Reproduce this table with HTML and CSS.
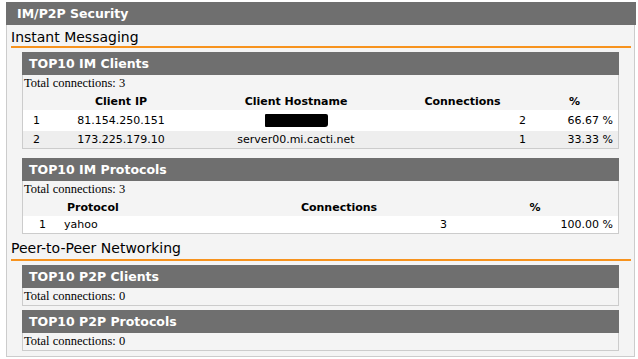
FILE: index.html
```html
<!DOCTYPE html>
<html>
<head>
<meta charset="utf-8">
<link rel="stylesheet" href="styles.css">
</head>
<body>
<div class="panel">
  <div class="panel-head">IM/P2P Security</div>

  <div class="section">Instant Messaging</div>

  <div class="box box-first">
    <div class="box-head">TOP10 IM Clients</div>
    <div class="total">Total connections: 3</div>
    <table class="grid">
      <colgroup><col style="width:21px"><col style="width:154px"><col style="width:196px"><col style="width:137px"><col></colgroup>
      <tr class="hrow"><th></th><th>Client IP</th><th>Client Hostname</th><th>Connections</th><th>%</th></tr>
      <tr class="row odd tall"><td class="idx">1</td><td class="c">81.154.250.151</td><td class="c"><span class="redact"></span></td><td class="r">2</td><td class="r">66.67 %</td></tr>
      <tr class="row even"><td class="idx">2</td><td class="c">173.225.179.10</td><td class="c">server00.mi.cacti.net</td><td class="r">1</td><td class="r">33.33 %</td></tr>
    </table>
  </div>

  <div class="box">
    <div class="box-head">TOP10 IM Protocols</div>
    <div class="total">Total connections: 3</div>
    <table class="grid">
      <colgroup><col style="width:39px"><col style="width:164px"><col style="width:226px"><col></colgroup>
      <tr class="hrow"><th></th><th class="l">Protocol</th><th>Connections</th><th>%</th></tr>
      <tr class="row odd"><td class="c">1</td><td class="l2">yahoo</td><td class="r">3</td><td class="r">100.00 %</td></tr>
    </table>
  </div>

  <div class="section section-p2p">Peer-to-Peer Networking</div>

  <div class="box">
    <div class="box-head">TOP10 P2P Clients</div>
    <div class="total">Total connections: 0</div>
  </div>

  <div class="box">
    <div class="box-head">TOP10 P2P Protocols</div>
    <div class="total">Total connections: 0</div>
  </div>
</div>
</body>
</html>
```

FILE: styles.css
```css
html, body {
  margin: 0;
  padding: 0;
  background: #ffffff;
}
body {
  padding: 2px 0 0 6px;
  font-family: "DejaVu Sans", Verdana, sans-serif;
  color: #000;
}
.panel {
  width: 627px;
  background: #f4f4f4;
  border: 1px solid #cccccc;
  border-top: none;
  padding-bottom: 5px;
}
.panel-head {
  height: 23px;
  line-height: 23px;
  margin: 0 -2px 0 -1px;
  background: #6f6f6f;
  color: #ffffff;
  font-weight: bold;
  font-size: 12.5px;
  padding-left: 11px;
}
.section {
  margin: 0 3px 0 4px;
  height: 21px;
  line-height: 25px;
  font-size: 14px;
  border-bottom: 2px solid #f7931e;
  color: #000;
}
.section-p2p {
  height: 25px;
  line-height: 29px;
}
.box {
  margin: 4px 0 0 15px;
  width: 595px;
  border: 1px solid #cccccc;
  border-top: none;
  background: #f4f4f4;
}
.box + .box {
  margin-top: 4px;
}
.box-first + .box {
  margin-top: 9px;
}
.box-head {
  height: 23px;
  line-height: 23px;
  background: #6f6f6f;
  color: #ffffff;
  font-weight: bold;
  font-size: 12.5px;
  padding-left: 7px;
  margin-left: -1px;
  margin-right: -1px;
}
.total {
  height: 17px;
  line-height: 17px;
  font-family: "Liberation Serif", "Times New Roman", serif;
  font-size: 12.5px;
  padding-left: 1px;
}
.grid {
  width: 100%;
  border-collapse: collapse;
  border-spacing: 0;
  table-layout: fixed;
  font-size: 11px;
}
.grid th {
  font-weight: bold;
  text-align: center;
  padding: 0;
  white-space: nowrap;
}
.grid td {
  padding: 0;
  white-space: nowrap;
}
.hrow {
  height: 18px;
}
.row {
  height: 17px;
}
.row.tall {
  height: 21px;
}
.odd {
  background: #ffffff;
}
.even {
  background: #eeeeee;
}
.c { text-align: center; }
.r { text-align: right; padding-right: 5px !important; }
.idx { text-align: left; padding-left: 10px !important; }
.grid th.l { text-align: left; padding-left: 5px; }
.l2 { text-align: left; padding-left: 2px !important; }
.redact {
  display: inline-block;
  width: 63px;
  height: 13px;
  background: #000;
  vertical-align: middle;
  border-radius: 1px 2px 3px 1px;
}
```
